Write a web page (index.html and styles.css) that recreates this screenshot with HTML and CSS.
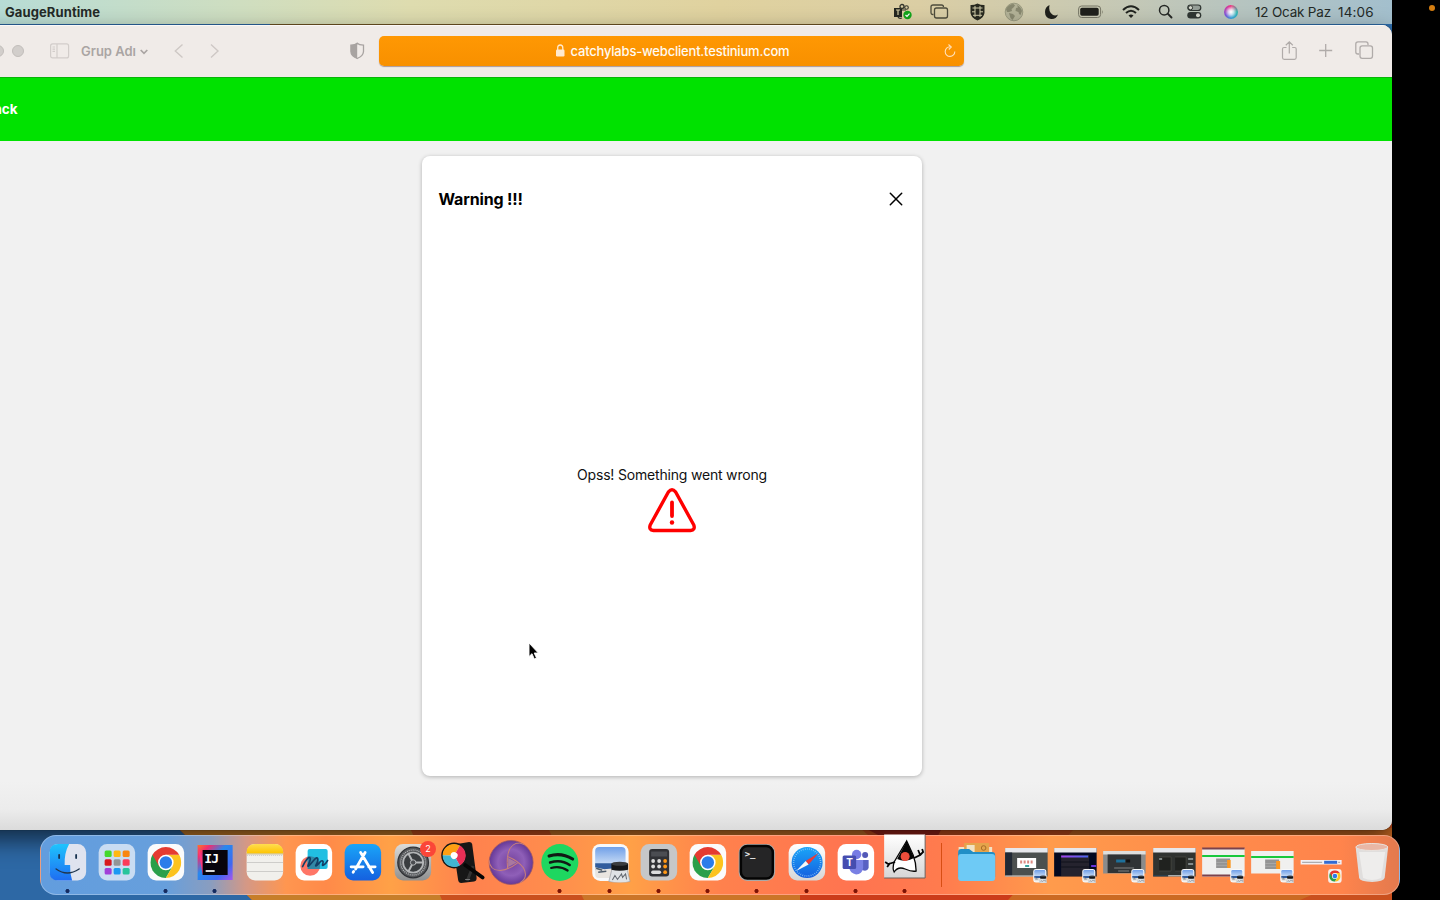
FILE: index.html
```html
<!DOCTYPE html>
<html lang="tr">
<head>
<meta charset="utf-8">
<title>GaugeRuntime</title>
<link rel="stylesheet" href="styles.css">
</head>
<body>
<svg width="0" height="0" class="defs">
  <defs>
    <linearGradient id="gBlue" x1="0" y1="0" x2="0" y2="1"><stop offset="0" stop-color="#1ec4fd"/><stop offset="1" stop-color="#1f6df2"/></linearGradient>
    <linearGradient id="gStore" x1="0" y1="0" x2="0" y2="1"><stop offset="0" stop-color="#1aa5f8"/><stop offset="1" stop-color="#1560df"/></linearGradient>
    <linearGradient id="gGrey" x1="0" y1="0" x2="0" y2="1"><stop offset="0" stop-color="#dcdcda"/><stop offset="1" stop-color="#8f9090"/></linearGradient>
    <linearGradient id="gLight" x1="0" y1="0" x2="0" y2="1"><stop offset="0" stop-color="#fff"/><stop offset="1" stop-color="#d6d6d6"/></linearGradient>
    <linearGradient id="gNote" x1="0" y1="0" x2="0" y2="1"><stop offset="0" stop-color="#ffdd50"/><stop offset="1" stop-color="#fdc400"/></linearGradient>
    <linearGradient id="gSky" x1="0" y1="0" x2="0" y2="1"><stop offset="0" stop-color="#709fe8"/><stop offset="1" stop-color="#c8dcf5"/></linearGradient>
    <linearGradient id="gIdea" x1="0" y1="0" x2="1" y2="1"><stop offset="0" stop-color="#ff7a20"/><stop offset=".18" stop-color="#f02d70"/><stop offset=".42" stop-color="#2789ee"/><stop offset=".75" stop-color="#3e67f2"/><stop offset="1" stop-color="#a854ef"/></linearGradient>
    <linearGradient id="gScreen" gradientUnits="userSpaceOnUse" x1="10" x2="38" y1="0" y2="0"><stop offset="0" stop-color="#a341ef"/><stop offset="1" stop-color="#4668ee"/></linearGradient>
    <radialGradient id="gViolet"><stop offset=".2" stop-color="#7d4ca6"/><stop offset=".6" stop-color="#8f5fb8"/><stop offset="1" stop-color="#653896"/></radialGradient>
    <symbol id="chrome" viewBox="0 0 32 32">
      <path d="M2.200 8A16 16 0 0 0 16 32L22.900 20 16 16Z" fill="#2b9f4a"/><path d="M16 8H29.800A16 16 0 0 1 16 32L22.900 20Z" fill="#fcc31e"/><path d="M2.200 8A16 16 0 0 1 29.800 8H16L9.100 20Z" fill="#e53b31"/><circle cx="16" cy="16" r="8" fill="#fff"/><circle cx="16" cy="16" r="6.400" fill="#2b7cea"/>
    </symbol>
    <symbol id="preview" viewBox="0 0 38 38">
      <rect width="36" height="36.500" rx="8" fill="#f7f8fa"/><path d="M3 7Q3 3 7 3H29Q33 3 33 7V20H3Z" fill="url(#gSky)"/><path d="M3 19H33V26H3Z" fill="#315c9d"/><path d="M3 23L12 25 22 24V33.500H7Q3 33.500 3 30Z" fill="#e9e5e0"/><path d="M4 24L10 26M6 28L14 27" stroke="#4d5b6a" stroke-width="1.500"/><path d="M19.500 25H34.500L37.500 37Q28 40 16.500 37Z" fill="#dfe3e6" stroke="#9b9fa4" stroke-width=".7"/><path d="M19 19.500V25.500Q27 27.500 35.500 25.500V19.500Z" fill="#161718"/><ellipse cx="27.250" cy="19.500" rx="8.250" ry="2" fill="#3a3c3e"/><path d="M20 35.500L22.500 31 25 35 29 29.500 30 33 33 29.500 34 35" fill="none" stroke="#636970" stroke-width="1"/>
    </symbol>
  </defs>
</svg>

<div class="screen">
  <div class="desktop">
    <svg class="wallpaper" viewBox="0 0 1392 900" width="1392" height="900">
      <path d="M0 0H1392V900H0Z" fill="#ca501e"/>
      <path d="M0 24H270L180 830 252 900H0Z" fill="#2d68a5"/>
      <path d="M270 24H1050V30H270Z" fill="#705523"/><path d="M1050 24H1392V60H1050Z" fill="#2d6caa"/>
      <path d="M178 828H410L442 900H252Z" fill="#c77e2a"/><path d="M548 828H860L942 900H584Z" fill="#cb7528"/><path d="M865 828H942L925 860Z" fill="#9d251b"/><path d="M800 895H1015V900H800Z" fill="#cb3c1a"/><path d="M1075 828H1392V860L1300 900H1008Z" fill="#cb6a23"/>
    </svg>

    <header class="menubar">
      <span class="app-name">GaugeRuntime</span>
      <div class="status">
        <svg width="20" height="18" viewBox="0 0 20 18"><path d="M1 5H9V14H1Z" fill="#252720"/><path d="M3 7H7M5 7V12" stroke="#d6cda5" stroke-width="1.200"/><circle cx="9" cy="3.500" r="2" fill="none" stroke="#34352c" stroke-width="1.300"/><circle cx="13.500" cy="4.500" r="1.800" fill="none" stroke="#34352c" stroke-width="1.100"/><path d="M9 7H13M9 15Q6 16 5 14" fill="none" stroke="#34352c" stroke-width="1.200"/><circle cx="14.500" cy="12" r="4.200" fill="#12a51b"/><path d="M12.500 12L14 13.500 16.500 10.700" fill="none" stroke="#fff" stroke-width="1.200"/></svg>
        <svg width="19" height="16" viewBox="0 0 19 16" fill="none" stroke="#4e4c3c" stroke-width="1.300"><path d="M3.500 10.500H3Q1 10.500 1 8.500V3Q1 1 3 1H11.500Q13.500 1 13.500 3"/><rect x="4.500" y="4" width="13" height="10" rx="2"/></svg>
        <svg width="16" height="18" viewBox="0 0 16 18"><path d="M7.500 .5Q11 2.200 14.500 2V10Q14 14.500 7.500 17.500 1 14.500 .5 10V2Q4 2.200 7.500 .5Z" fill="#292a20"/><path d="M2.500 5H12.500M2 8.800H5M10 8.800H13M3 12.300H12M5 3V14M10 3V14" stroke="#d0cba8" stroke-width="1"/></svg>
        <svg width="20" height="20" viewBox="0 0 20 20"><circle cx="10" cy="10" r="8.800" fill="#b3b297" stroke="#99997f" stroke-width="1"/><path d="M2 7Q5 2 9.500 2L11 3.500 9 6 7.500 7 8 9 5 10 3 10ZM5 11L9 12 11 14 8.500 18 6.500 16ZM13 3Q17 5 18 9L16.500 13 15 12 14.500 10 11.500 9 12 6 14 5.500Z" fill="#88886f"/></svg>
        <svg width="15" height="16" viewBox="0 0 15 16"><path d="M5.500 1Q4 8 9 11Q11.500 12 14 10.500Q12 15.500 7 15Q1 14 1 8Q1 3 5.500 1Z" fill="#20211c"/></svg>
        <svg width="26" height="14" viewBox="0 0 26 14"><rect x=".6" y="1" width="22" height="11.500" rx="3" fill="none" stroke="#777766"/><rect x="2.200" y="2.700" width="18.500" height="8.100" rx="1.700" fill="#1f201b"/><path d="M24 5V9Q25.500 7 24 5Z" fill="#777766"/></svg>
        <svg width="18" height="14" viewBox="0 0 18 14" fill="none" stroke="#20231f" stroke-width="2"><path d="M1 5Q9-2.500 17 5M4 8Q9 3.500 14 8"/><path d="M6.500 10.500Q9 8.500 11.500 10.500L9 13Z" fill="#20231f" stroke="none"/></svg>
        <svg width="15" height="15" viewBox="0 0 15 15" fill="none" stroke="#252825" stroke-width="1.500"><circle cx="6.200" cy="6.200" r="4.700"/><path d="M9.700 9.700L13.500 13.500" stroke-width="1.900" stroke-linecap="round"/></svg>
        <svg width="15" height="15" viewBox="0 0 15 15"><rect x=".8" y="1" width="13" height="5.500" rx="2.750" fill="#969f98" stroke="#303733" stroke-width="1.200"/><circle cx="3.500" cy="3.700" r="2.100" fill="#d6d9ce" stroke="#303733"/><rect x=".3" y="8" width="14" height="6.500" rx="3.250" fill="#303733"/><circle cx="11" cy="11.200" r="2" fill="#d6d9ce"/></svg>
        <span class="siri"></span>
        <span class="clock">12 Ocak Paz</span>
        <span class="clock time">14:06</span>
      </div>
    </header>

    <main class="window">
      <nav class="toolbar">
        <i class="light"></i><i class="light"></i>
        <svg width="20" height="16" viewBox="0 0 20 16" fill="none" stroke="#d2cdca" stroke-width="1.200"><rect x=".6" y=".9" width="18" height="14" rx="2"/><path d="M7 1V15M2.500 4H5M2.500 6.200H5M2.500 8.400H5"/></svg>
        <span class="group">Grup Adı <svg width="8" height="6" viewBox="0 0 8 6" fill="none" stroke="#aaa5a3" stroke-width="1.700"><path d="M.7 1L4 4.300 7.300 1"/></svg></span>
        <svg width="10" height="16" viewBox="0 0 10 16" fill="none" stroke="#cec8c5" stroke-width="1.400"><path d="M8.500 1.500L1.300 8 8.500 14.500"/></svg>
        <svg width="10" height="16" viewBox="0 0 10 16" fill="none" stroke="#cec8c5" stroke-width="1.400"><path d="M1 1.500L8 8 1 14.500"/></svg>
        <svg width="15" height="18" viewBox="0 0 15 18"><path d="M7.200 1.200Q9 3 13.500 3.200V9.500Q13.200 14 7.200 16.500 1 14 .9 9.500V3.200Q5.500 3 7.200 1.200Z" fill="none" stroke="#a8a3a1" stroke-width="1.300"/><path d="M7.200 1V16.500Q1 14 .9 9.500V3.200Q5.500 3 7.200 1Z" fill="#a8a3a1"/></svg>
        <div class="address">
          <span class="host"><svg width="9" height="13" viewBox="0 0 9 13"><rect y="5.500" width="8.500" height="7" rx="1.200" fill="#ffead0"/><path d="M1.700 6V3.800Q1.700 1 4.250 1T6.800 3.800V6" fill="none" stroke="#ffead0" stroke-width="1.300"/></svg>catchylabs-webclient.testinium.com</span>
          <svg class="reload" width="12" height="14" viewBox="0 0 12 14" fill="none" stroke="#ffe0b8" stroke-width="1.100"><path d="M6 2.800A4.800 4.800 0 1 0 10.800 7.500M4.500 .5L7.300 3 4.800 5.500"/></svg>
        </div>
        <svg width="17" height="20" viewBox="0 0 17 20" fill="none" stroke="#b0aba9" stroke-width="1.200"><path d="M5.500 6.500H3Q1.500 6.500 1.500 8V16.500Q1.500 18.300 3.200 18.300H13.500Q15.200 18.300 15.200 16.500V8Q15.200 6.500 13.700 6.500H11.200M8.300 12.500V1M4.800 4.300L8.300 .9 11.800 4.300"/></svg>
        <svg width="15" height="15" viewBox="0 0 15 15" stroke="#b0aba9" stroke-width="1.300"><path d="M7.700 1V14M1.200 7.500H14.200"/></svg>
        <svg width="19" height="19" viewBox="0 0 19 19" fill="none" stroke="#b0aba9" stroke-width="1.300"><path d="M4 13H3Q.8 13 .8 11V3Q.8 .8 3 .8H11Q13 .8 13 3V4"/><rect x="5" y="4.800" width="12.500" height="12.500" rx="2.200"/></svg>
      </nav>
      <div class="banner"><span class="back">Back</span></div>
      <section class="page">
        <article class="card">
          <div class="card-head"><h1>Warning !!!</h1><svg width="14" height="14" viewBox="0 0 14 14" stroke="#000" stroke-width="1.500" stroke-linecap="round"><path d="M1.300 1.300L12.700 12.700M12.700 1.300L1.300 12.700"/></svg></div>
          <div class="card-body">
            <p>Opss! Something went wrong</p>
            <svg width="50" height="45" viewBox="0 0 50 45"><path d="M21.500 3.800Q25 -.2 28.500 3.800L46.800 37Q48.500 42 43.500 42.500H6.500Q1.500 42 3.200 37Z" fill="none" stroke="#f00" stroke-width="3.400" stroke-linejoin="round"/><path d="M25 14.500V28" stroke="#f00" stroke-width="3.800" stroke-linecap="round"/><circle cx="25" cy="34.500" r="2.200" fill="#f00"/></svg>
          </div>
        </article>
      </section>
    </main>
    <svg class="pointer" width="12" height="19" viewBox="0 0 12 19"><path d="M1 1V14.500L4 11.700 6.300 17 8.500 16 6.200 11H10.300Z" fill="#000" stroke="#fff" stroke-width=".9"/></svg>
  </div>
  <i class="mic-dot"></i>

  <footer class="dock">
    <svg class="app running" viewBox="0 0 49 60"><rect x="6.500" y="9" width="36.500" height="36.500" rx="8.500" fill="#dfe3ef"/><path d="M15 9H26Q21 18 21.500 30H27Q26.500 38 29 45.500H15Q6.500 45.500 6.500 37V17.500Q6.500 9 15 9Z" fill="url(#gBlue)"/><path d="M16 20V23M33 20V23" stroke="#17324f" stroke-width="1.800" stroke-linecap="round"/><path d="M13 34Q24 42 36 34" fill="none" stroke="#21364e" stroke-width="1.500" stroke-linecap="round"/></svg>
    <svg class="app" viewBox="0 0 49 60"><rect x="6.500" y="9" width="36.500" height="36.500" rx="8.500" fill="#c9dcf2"/><g><rect x="12.500" y="15.500" width="7" height="6.500" rx="1.500" fill="#42d82d"/><rect x="21.500" y="15.500" width="7" height="6.500" rx="1.500" fill="#ffb812"/><rect x="30.500" y="15.500" width="7" height="6.500" rx="1.500" fill="#f98512"/><rect x="12.500" y="24.300" width="7" height="6.500" rx="1.500" fill="#d71920"/><rect x="21.500" y="24.300" width="7" height="6.500" rx="1.500" fill="#929597"/><rect x="30.500" y="24.300" width="7" height="6.500" rx="1.500" fill="#fb3b59"/><rect x="12.500" y="33" width="7" height="6.500" rx="1.500" fill="#a13fd8"/><rect x="21.500" y="33" width="7" height="6.500" rx="1.500" fill="#1c99f3"/><rect x="30.500" y="33" width="7" height="6.500" rx="1.500" fill="#27c49b"/></g></svg>
    <svg class="app running" viewBox="0 0 49 60"><rect x="6.500" y="9" width="36.500" height="36.500" rx="8.500" fill="#fbfbfb"/><use href="#chrome" x="9.200" y="12" width="31" height="31"/></svg>
    <svg class="app running" viewBox="0 0 49 60"><path d="M7.500 10H42.500V45H7.500Z" fill="url(#gIdea)"/><path d="M7.500 10L14 28 12.500 40Z" fill="#ff367a"/><path d="M12.500 15H37.500V40H12.500Z" fill="#08040c"/><text x="14.200" y="27.700" class="ij">IJ</text><path d="M15.500 36H24.500" stroke="#fff" stroke-width="1.700"/></svg>
    <svg class="app" viewBox="0 0 49 60"><rect x="6.500" y="9" width="36.500" height="36.500" rx="8.500" fill="#f1f0ec"/><path d="M6.500 18.500V17.500Q6.500 9 15 9H34.500Q43 9 43 17.500V18.500Z" fill="url(#gNote)"/><path d="M6.500 19H43" stroke="#b9a869" stroke-width=".7"/><path d="M7 20.500H43" stroke="#bbb" stroke-width=".7" stroke-dasharray="1 1"/><path d="M6.500 27.500H43M6.500 36.500H43" stroke="#c5c4c1" stroke-width=".8"/></svg>
    <svg class="app" viewBox="0 0 49 60"><rect x="6.500" y="9" width="36.500" height="36.500" rx="8.500" fill="#fff"/><circle cx="21" cy="31" r="9.800" fill="#ff7667"/><rect x="18.500" y="14" width="20" height="20" rx="2" fill="#21bfe2"/><path d="M18.500 21.500A10 10 0 0 1 30.500 34H18.500Z" fill="#3187a5"/><path d="M13.500 31.500C16 26 20 20.500 21 23.200S17 32.500 19.500 31 27 20.500 28.500 23.500 24.500 32.500 27.500 30.500 31.500 24.500 33.500 26 31.500 31.500 34.500 30 38 26 38.500 25.500" fill="none" stroke="#123e65" stroke-width="1.700" stroke-linecap="round"/></svg>
    <svg class="app" viewBox="0 0 49 60"><rect x="6.500" y="9" width="36.500" height="36.500" rx="8.500" fill="url(#gStore)"/><path d="M22.500 17.500L34.500 37.500M27 17.500L17.500 34M13 31.800H25M30.500 31.800H37M15 37.300L15.500 36.500" fill="none" stroke="#fff" stroke-width="2.800" stroke-linecap="round"/></svg>
    <span class="badged"><svg class="app" viewBox="0 0 49 60"><rect x="6.500" y="9" width="36.500" height="36.500" rx="8.500" fill="url(#gGrey)"/><circle cx="25" cy="27.500" r="15.300" fill="#55575a" stroke="#303236" stroke-width="1.300"/><circle cx="25" cy="27.500" r="12.500" fill="none" stroke="#b7b9bb" stroke-width="1.300" stroke-dasharray="1 1"/><circle cx="25" cy="27.500" r="10" fill="#3a3d40" stroke="#b3b5b7" stroke-width="1.700"/><path d="M25 27.500L20 18M25 27.500H36M25 27.500L20 37" stroke="#b5b7b9" stroke-width="2"/><circle cx="25" cy="27.500" r="2.700" fill="#4a4c50" stroke="#b5b7b9"/></svg><b class="badge">2</b></span>
    <svg class="app" viewBox="0 0 49 60"><path d="M20 9L32 7Q34.500 7 35 9L39.500 43Q39.500 46 37 46.500L24 48Q21.500 48 21 45L16 12Q16 9.500 20 9Z" fill="#171717"/><path d="M36 31L30 46" stroke="#333" stroke-width="3"/><path d="M28 30L45.500 42.500" stroke="#060606" stroke-width="3.800" stroke-linecap="round"/><circle cx="17" cy="20.500" r="12" fill="#fff" stroke="#161616" stroke-width="1.800"/><g fill="none" stroke-width="8" stroke-dasharray="15.710 31.410"><circle cx="17" cy="20.500" r="7.500" stroke="#ff9f12" transform="rotate(180 17 20.500)"/><circle cx="17" cy="20.500" r="7.500" stroke="#e92f56" transform="rotate(-60 17 20.500)"/><circle cx="17" cy="20.500" r="7.500" stroke="#42b5d0" transform="rotate(60 17 20.500)"/></g><path d="M28 44.500H33" stroke="#777"/></svg>
    <svg class="app" viewBox="0 0 49 60"><circle cx="25" cy="27.500" r="22" fill="url(#gViolet)" stroke="#9e5964" stroke-width=".8"/><path d="M22 23L30.500 27.500 22 32Z" fill="#a9789f"/><g fill="none" stroke="#c98079" stroke-width="1"><path id="blade" d="M38 9.500Q29 5 23.500 14Q20 22 21.500 33"/><use href="#blade" transform="rotate(120 25 27.500)"/><use href="#blade" transform="rotate(240 25 27.500)"/></g></svg>
    <svg class="app running" viewBox="0 0 49 60"><circle cx="24.700" cy="27.500" r="18.500" fill="#1ed760"/><g fill="none" stroke="#111914" stroke-linecap="round"><path d="M14 21Q26 17 37.500 24" stroke-width="3.200"/><path d="M15 27.500Q26 24 34.500 30" stroke-width="2.600"/><path d="M16 33Q25 30.500 32.500 35.500" stroke-width="2.200"/></g></svg>
    <svg class="app running" viewBox="0 0 49 60"><use href="#preview" x="7" y="9" width="38.500" height="38.500"/></svg>
    <svg class="app running" viewBox="0 0 49 60"><rect x="6.500" y="9" width="36.500" height="36.500" rx="8.500" fill="#c6c7c8"/><rect x="15" y="14" width="20" height="27.500" rx="3" fill="#303135"/><path d="M17 16.500H33V21.500H17Z" fill="#4b4d52"/><g fill="#ddd"><circle cx="19" cy="26" r="1.900"/><circle cx="25" cy="26" r="1.900"/><circle cx="19" cy="31.500" r="1.900"/><circle cx="25" cy="31.500" r="1.900"/><rect x="17" y="35.500" width="10" height="3.500" rx="1.700"/></g><g fill="#ff9815"><circle cx="31" cy="26" r="1.900"/><circle cx="31" cy="31.500" r="1.900"/><circle cx="31" cy="37.200" r="1.900"/></g></svg>
    <svg class="app running" viewBox="0 0 49 60"><rect x="6.500" y="9" width="36.500" height="36.500" rx="8.500" fill="#fbfbfb"/><use href="#chrome" x="9.200" y="12" width="31" height="31"/></svg>
    <svg class="app running" viewBox="0 0 49 60"><rect x="6.500" y="9" width="36.500" height="37" rx="8.500" fill="#aaa9a7"/><rect x="8.700" y="11" width="32" height="32.500" rx="6.500" fill="#252526" stroke="#040404" stroke-width="2.500"/><text x="12.500" y="22" class="term">&gt;_</text></svg>
    <svg class="app running" viewBox="0 0 49 60"><rect x="6.500" y="9" width="36.500" height="36.500" rx="8.500" fill="url(#gLight)"/><circle cx="25" cy="27.500" r="15.500" fill="url(#gStore)"/><circle cx="25" cy="27.500" r="13.500" fill="none" stroke="#9cd5fb" stroke-width="1.600" stroke-dasharray=".6 1.500"/><path d="M36.500 18L26.500 29.500 23.500 26Z" fill="#ec3b35"/><path d="M14 36L23.500 26 26.500 29.500Z" fill="#f7f7f7"/></svg>
    <svg class="app running" viewBox="0 0 49 60"><rect x="6.500" y="9" width="36.500" height="36.500" rx="8.500" fill="#fff"/><circle cx="25.500" cy="19.500" r="4.700" fill="#777be4"/><circle cx="34" cy="20" r="3" fill="#5258b7"/><path d="M30 25H37.500V33Q36 37 31 35Z" fill="#5961c3"/><path d="M18 25H32V33Q31 39 25 39.500 19 38 18 33Z" fill="#7980e4"/><rect x="11.500" y="20.500" width="13.500" height="13.500" rx="1.500" fill="#454db0"/><text x="15" y="31" class="tee">T</text></svg>
    <svg class="app running" viewBox="0 0 49 60"><path d="M4 -.5H45V43H4Z" fill="url(#gLight)"/><path d="M4 43H45V0" fill="none" stroke="#6b625f"/><path d="M26.500 6L14 27Q12 34 14 37Q18 31 25 34T36 36Q36 28 33 20Z" fill="#fff" stroke="#050505" stroke-width="1.300"/><path d="M26.500 6L17 24Q25 28 34 23Z" fill="#050505"/><path d="M15 27L8 29L5 27M10 28L7 32M34 23L40 20L38 15M40 20L43 17L42 14" fill="none" stroke="#050505" stroke-width="1.800"/><circle cx="25" cy="21.500" r="4.500" fill="#ed4d3b"/></svg>
    <i class="separator"></i>
    <svg class="app" viewBox="0 0 49 60"><path d="M12 8H37V22H12Z" fill="#e5a44b"/><path d="M6.500 18V12H12V18ZM14.500 10H22.500V18H14.500ZM37 12H40V18H37Z" fill="#f2e3c5"/><circle cx="31.500" cy="13" r="2.300" fill="none" stroke="#a96d27"/><path d="M6 17Q6 14 9 14H17L21 17H40Q43 17 43 20V42H6Z" fill="#218fc6"/><rect x="6" y="19" width="37" height="27" rx="3" fill="#6ecaf5"/></svg>
    <svg class="app" viewBox="0 0 49 60"><path d="M3 13H45.500V41.500H3Z" fill="#4b504f"/><path d="M3 13H45.500V17.500H3Z" fill="#e7e8ec"/><path d="M3 17.500H10V41H3Z" fill="#212935"/><path d="M15 23H34V33H15Z" fill="#fff"/><path d="M18 27H31" stroke="#dc8a82" stroke-width="3" stroke-dasharray="2 1.500"/><path d="M23 31H27" stroke="#3ca4a0" stroke-width="2"/><path d="M3 41H45" stroke="#ddd"/><use href="#preview" x="31" y="34" width="14" height="14"/></svg>
    <svg class="app" viewBox="0 0 49 60"><path d="M3 13H45.500V41.500H3Z" fill="#030920"/><path d="M3 13H45.500V17.500H3Z" fill="#e7e8ec"/><path d="M10 20H38V41H10Z" fill="#25232e"/><path d="M10 20.500H37V22.500H10Z" fill="url(#gScreen)"/><path d="M10 27H38M10 32H38" stroke="#11121b"/><path d="M40 31H45" stroke="#6532da" stroke-width="2"/><use href="#preview" x="31" y="34" width="14" height="14"/></svg>
    <svg class="app" viewBox="0 0 49 60"><path d="M3 16H45.500V38.500H3Z" fill="#8b8b8b"/><path d="M3 16H45.500V19.500H3Z" fill="#dededd"/><path d="M7.500 19.500H41V38H7.500Z" fill="#303335"/><path d="M16 26H25" stroke="#1d709b" stroke-width="3"/><path d="M26 26H30" stroke="#111" stroke-width="3"/><path d="M14 33H34M18 36H29" stroke="#a3a3a3" stroke-width=".7"/><use href="#preview" x="31" y="34" width="14" height="14"/></svg>
    <svg class="app" viewBox="0 0 49 60"><path d="M3 13H45.500V41.500H3Z" fill="#303331"/><path d="M3 13H45.500V17.500H3Z" fill="#e7e8ec"/><path d="M9 22H21V36H9M25 22H36V36H25" fill="#20221f" stroke="#51504a" stroke-width=".6"/><path d="M9 24H12M38 24H43M38 29H43" stroke="#9fa9a9" stroke-width="1.500"/><path d="M3 40.800H18" stroke="#29455c"/><path d="M18 40.800H34" stroke="#dce3e5"/><use href="#preview" x="31" y="34" width="14" height="14"/></svg>
    <svg class="app" viewBox="0 0 49 60"><path d="M3 13H45.500V41.500H3Z" fill="#f0f0ef"/><path d="M3 13.500H45.500M3 40.500H34" stroke="#7b424d" stroke-width="2"/><path d="M3 21H45.500" stroke="#19c83c" stroke-width="2"/><path d="M17 23.500H31V33H17Z" fill="#949494"/><path d="M28 25H31.500V33H28Z" fill="#ff981f"/><path d="M17 27.500H28M17 30.300H28" stroke="#bbb" stroke-width=".5"/><use href="#preview" x="31" y="34" width="14" height="14"/></svg>
    <svg class="app" viewBox="0 0 49 60"><path d="M3 16H45.500V38.500H3Z" fill="#f0f0ef"/><path d="M3 22H45.500" stroke="#19c83c" stroke-width="2"/><path d="M17 24.500H31V34H17Z" fill="#949494"/><path d="M28 26H32V34H28Z" fill="#ff981f"/><path d="M17 28.500H28M17 31.300H28" stroke="#bbb" stroke-width=".5"/><use href="#preview" x="32" y="34" width="14" height="14"/></svg>
    <svg class="app" viewBox="0 0 49 60"><path d="M3.500 25H44.500V29.500H3.500Z" fill="#f2f0f5"/><path d="M27 25.800H40V28.800H27Z" fill="#326bd2"/><path d="M5 27.300H25M41 27.300H43" stroke="#777" stroke-width=".7"/><rect x="31" y="34" width="13.500" height="14" rx="3" fill="#f7eee9"/><use href="#chrome" x="32" y="35.200" width="11.500" height="11.500"/></svg>
    <svg class="app" viewBox="0 0 49 60"><path d="M8.500 12L12 43Q12.500 46.500 25 47Q36.500 46.500 37.500 43L41 12Z" fill="#e0dedd"/><path d="M12 17L16 43Q25 47 34 43L38 17" fill="#eeedec"/><ellipse cx="24.700" cy="12" rx="16" ry="3.500" fill="#e9b7a5" stroke="#e9e3df"/></svg>
  </footer>
</div>
</body>
</html>
```

FILE: styles.css
```css
* { box-sizing: border-box; }
body { margin: 0; background: #000; font-family: Inter, "Liberation Sans", sans-serif; }
.defs { position: absolute; }
.screen { position: relative; width: 1440px; height: 900px; overflow: hidden; background: #000; }
.desktop { position: relative; width: 1392px; height: 900px; overflow: hidden; }
.wallpaper { position: absolute; inset: 0; }

.menubar { position: relative; height: 24px; display: flex; align-items: center; justify-content: space-between; padding: 0 0 1px 5px; background: linear-gradient(90deg, #b7dcd5 0, #cfdec0 240px, #dedcaf 410px, #e0d29f 720px, #dbcea4 920px, #c4c8b6 1130px, #a3bfcd 1392px); color: #242a27; }
.app-name { font-size: 13px; font-weight: 700; letter-spacing: .1px; }
.status { display: grid; grid-template-columns: 37px 40px 34px 40px 34px 44px 36px 29px 37px 31px 83px 54px; align-items: center; }
.siri { width: 14px; height: 14px; border-radius: 50%; background: radial-gradient(circle, #fff 5%, #f6faffbb 28%, transparent 60%), conic-gradient(#ec4e84, #31b6ae 25%, #37a8dc 48%, #775ae0 65%, #f42e83); }
.clock { font-size: 13.500px; white-space: nowrap; letter-spacing: -.2px; }
.time { letter-spacing: .15px; }

.window { position: absolute; left: -48px; top: 25px; width: 1440px; height: 805px; border-radius: 10px; overflow: hidden; background: #f1f1f1; box-shadow: 0 0 1px #000b, 0 10px 24px #0009; }
.toolbar { height: 52px; padding: 0 0 2px 40px; display: grid; grid-template-columns: 20px 38px 31px 93px 36px 139.500px 29.500px 902px 37px 37px 37px; align-items: center; background: #f0ebe8; border-top: 1px solid #faf8f7; }
.light { width: 12px; height: 12px; border-radius: 50%; background: #d2cecb; border: 1px solid #c2bebb; }
.group { color: #aaa5a3; font-size: 13px; font-weight: 600; white-space: nowrap; }
.group svg { margin-left: 1px; vertical-align: 1px; }
.address { width: 585px; height: 30px; padding: 0 8px 0 22px; display: flex; align-items: center; border-radius: 5px; background: linear-gradient(#ff9803, #f89000); box-shadow: 0 1px 1px #a99; }
.host { flex: 1; display: flex; align-items: center; justify-content: center; gap: 6px; color: #fffaf2; font-size: 13px; font-weight: 500; letter-spacing: -.2px; }
.banner { height: 64px; padding-bottom: 1px; border-top: 1px solid #08b508; display: flex; align-items: center; background: #00e200; }
.back { width: 65.500px; text-align: right; color: #fff; font-size: 13.500px; font-weight: 700; }
.page { height: 689px; padding-top: 14.500px; display: flex; justify-content: center; align-items: flex-start; background: linear-gradient(#f1f1f1 640px, #ececec 668px, #dbdbdb 689px); }
.card { width: 500px; height: 620px; border-radius: 8px; background: #fff; box-shadow: 0 1px 4px #0004; display: flex; flex-direction: column; }
.card-head { height: 87px; padding: 0 19px 0 16.500px; display: flex; align-items: center; justify-content: space-between; }
h1 { margin: 0; font-size: 16px; font-weight: 700; letter-spacing: -.15px; }
.card-body { flex: 1; padding-bottom: 20px; display: flex; flex-direction: column; align-items: center; justify-content: center; }
.card-body p { margin: 0 0 3px; font-size: 14px; line-height: 20px; letter-spacing: -.19px; color: #111; }
.pointer { position: absolute; left: 528px; top: 642px; }
.mic-dot { position: absolute; left: 1429px; top: 5px; width: 6px; height: 6px; border-radius: 50%; background: #d47d10; }

.dock { position: absolute; left: 40px; top: 835px; width: 1360px; height: 60px; padding-left: 1.700px; display: flex; border-radius: 16px; border: 1px solid #ffffff48; background: linear-gradient(90deg, #629dde 0, #679fdc 125px, #8a9dbf 170px, #d49886 205px, #ff9650 245px, #ff8a49 285px, #ffa147 350px, #ff824e 430px, #ff8c4d 510px, #ffa047 590px, #ff814d 680px, #ff7450 810px, #ff7b4e 900px, #ff9b4c 1010px, #ff8c4b 1160px, #ff844c 1300px, #e2794e 1360px); }
.dock .app { display: block; flex: none; width: 49.280px; height: 60px; margin-top: -1px; overflow: visible; }
.running { background: radial-gradient(circle at 24.500px 56px, #7d1305 1.700px, transparent 2.400px); }
.running:nth-child(-n+4) { background: radial-gradient(circle at 24.500px 56px, #152b60 1.700px, transparent 2.400px); }
.badged { position: relative; flex: none; }
.badge { position: absolute; left: 32.500px; top: 4.500px; width: 16px; height: 16px; border-radius: 50%; background: #fb4638; color: #fff; font-size: 9px; line-height: 16px; font-weight: 400; text-align: center; }
.separator { flex: none; width: 23px; background: linear-gradient(#d84e13, #d84e13) 12px 7px / 1px 44px no-repeat; }
.ij { font: 700 13px "DejaVu Sans Mono", monospace; letter-spacing: -1px; fill: #fff; }
.term { font: 700 9px "DejaVu Sans Mono", monospace; fill: #f0f0f0; }
.tee { font: 700 10px Inter, sans-serif; fill: #fff; }
```
